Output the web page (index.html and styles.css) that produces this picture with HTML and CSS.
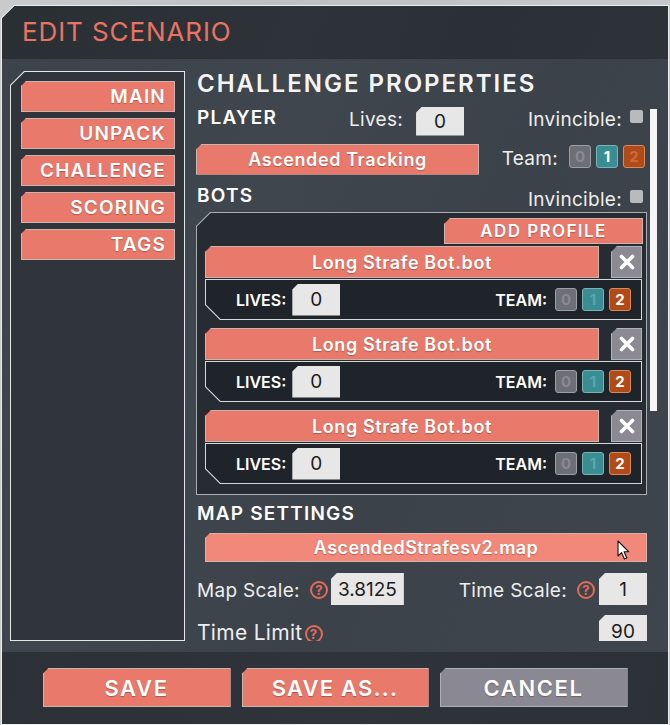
FILE: index.html
```html
<!DOCTYPE html>
<html>
<head>
<meta charset="utf-8">
<title>Edit Scenario</title>
<link rel="stylesheet" href="styles.css">
</head>
<body>
<div class="panel">
  <div class="panel-inner">
    <header class="head"><h1 class="head-title">EDIT SCENARIO</h1></header>
    <div class="main">
      <nav class="nav">
        <div class="nav-in">
          <div class="nav-btn">MAIN</div>
          <div class="nav-btn">UNPACK</div>
          <div class="nav-btn">CHALLENGE</div>
          <div class="nav-btn">SCORING</div>
          <div class="nav-btn">TAGS</div>
        </div>
      </nav>
      <section class="content">
        <div class="scroll">
          <h2 class="title">CHALLENGE PROPERTIES</h2>
          <div class="row row-player">
            <span class="sect sect-player">PLAYER</span>
            <span class="lbl lbl-lives">Lives:</span>
            <span class="field field-lives">0</span>
            <span class="lbl lbl-inv">Invincible:</span>
            <span class="check"></span>
          </div>
          <div class="row row-team">
            <span class="sbtn sbtn-profile">Ascended Tracking</span>
            <span class="lbl lbl-team">Team:</span>
            <span class="teams teams-player">
              <span class="tb tb0">0</span><span class="tb tb1 on">1</span><span class="tb tb2">2</span>
            </span>
          </div>
          <div class="row row-bots">
            <span class="sect sect-bots">BOTS</span>
            <span class="lbl lbl-inv2">Invincible:</span>
            <span class="check check2"></span>
          </div>
          <div class="bots">
            <div class="bots-in">
              <div class="add-row"><span class="sbtn add-btn">ADD PROFILE</span></div>

              <div class="bot">
                <div class="bot-head">
                  <span class="sbtn bot-name">Long Strafe Bot.bot</span>
                  <span class="del"><svg width="18" height="16" viewBox="0 0 18 16"><path d="M3.5 2.5 L14.5 13.5 M14.5 2.5 L3.5 13.5" stroke="#fff" stroke-width="3.6" stroke-linecap="round"/></svg></span>
                </div>
                <div class="bot-row">
                  <div class="bot-row-in">
                    <span class="blbl">LIVES:</span>
                    <span class="field field-bot">0</span>
                    <span class="blbl blbl-team">TEAM:</span>
                    <span class="teams teams-bot">
                      <span class="tb tb0">0</span><span class="tb tb1">1</span><span class="tb tb2 on">2</span>
                    </span>
                  </div>
                </div>
              </div>

              <div class="bot">
                <div class="bot-head">
                  <span class="sbtn bot-name">Long Strafe Bot.bot</span>
                  <span class="del"><svg width="18" height="16" viewBox="0 0 18 16"><path d="M3.5 2.5 L14.5 13.5 M14.5 2.5 L3.5 13.5" stroke="#fff" stroke-width="3.6" stroke-linecap="round"/></svg></span>
                </div>
                <div class="bot-row">
                  <div class="bot-row-in">
                    <span class="blbl">LIVES:</span>
                    <span class="field field-bot">0</span>
                    <span class="blbl blbl-team">TEAM:</span>
                    <span class="teams teams-bot">
                      <span class="tb tb0">0</span><span class="tb tb1">1</span><span class="tb tb2 on">2</span>
                    </span>
                  </div>
                </div>
              </div>

              <div class="bot">
                <div class="bot-head">
                  <span class="sbtn bot-name">Long Strafe Bot.bot</span>
                  <span class="del"><svg width="18" height="16" viewBox="0 0 18 16"><path d="M3.5 2.5 L14.5 13.5 M14.5 2.5 L3.5 13.5" stroke="#fff" stroke-width="3.6" stroke-linecap="round"/></svg></span>
                </div>
                <div class="bot-row">
                  <div class="bot-row-in">
                    <span class="blbl">LIVES:</span>
                    <span class="field field-bot">0</span>
                    <span class="blbl blbl-team">TEAM:</span>
                    <span class="teams teams-bot">
                      <span class="tb tb0">0</span><span class="tb tb1">1</span><span class="tb tb2 on">2</span>
                    </span>
                  </div>
                </div>
              </div>
            </div>
          </div>

          <div class="row row-map"><span class="sect">MAP SETTINGS</span></div>
          <div class="map-btn">AscendedStrafesv2.map
            <svg class="cursor" width="13" height="21" viewBox="0 0 13 21"><path d="M1 1 L1 16 L4.6 12.6 L7.4 19 L9.8 18 L7.1 11.8 L11.8 11.8 Z" fill="#fff" stroke="#111" stroke-width="1.1" stroke-linejoin="round"/></svg>
          </div>
          <div class="row row-scale">
            <span class="lbl lbl-big">Map Scale:</span>
            <span class="help">?</span>
            <span class="field field-scale">3.8125</span>
            <span class="lbl lbl-big lbl-ts">Time Scale:</span>
            <span class="help help-ts">?</span>
            <span class="field field-small">1</span>
          </div>
          <div class="row row-limit">
            <span class="lbl lbl-limit">Time Limit</span>
            <span class="help help-tl">?</span>
            <span class="field field-small field-tl">90</span>
          </div>
        </div>
        <div class="track"><div class="thumb"></div></div>
      </section>
    </div>
    <footer class="foot">
      <div class="fbtn">SAVE</div>
      <div class="fbtn fbtn-as">SAVE AS...</div>
      <div class="fbtn fbtn-cancel">CANCEL</div>
    </footer>
  </div>
</div>
</body>
</html>
```

FILE: styles.css
```css
* { box-sizing: border-box; margin: 0; padding: 0; }

html, body { width: 670px; height: 725px; overflow: hidden; }

body {
  background: linear-gradient(90deg, #c9cacb 0%, #bdbfc0 40%, #c6c8c9 100%);
  font-family: Inter, "Open Sans", "DejaVu Sans", sans-serif;
  color: #f2f2f2;
}

/* ---------- outer panel ---------- */
.panel {
  margin: 5px 0 0 1px;
  width: 668px;
  height: 720px;
  padding: 1px;
  background: #eceeef;
  clip-path: polygon(13px 0, 100% 0, 100% 100%, 0 100%, 0 13px);
}

.panel-inner {
  height: 100%;
  display: flex;
  flex-direction: column;
  background: #3d444b;
  clip-path: polygon(12.6px 0, 100% 0, 100% 100%, 0 100%, 0 12.6px);
}

.head {
  flex: 0 0 53px;
  height: 53px;
  display: flex;
  align-items: center;
  padding: 0 0 2px 20px;
  background: linear-gradient(110deg, #2a2f34 0%, #2d3338 45%, #2a3035 70%, #2c3237 100%);
}

.head-title {
  font-size: 26px;
  font-weight: 400;
  color: #ea7362;
  line-height: 30px;
  letter-spacing: 0.9px;
}

.main {
  flex: 0 0 593px;
  height: 593px;
  display: flex;
  background: linear-gradient(115deg, #3c434a 0%, #3f464d 35%, #3b4249 60%, #3e454c 100%);
}

/* ---------- left nav ---------- */
.nav {
  margin: 12px 0 0 8px;
  width: 175px;
  height: 570px;
  padding: 1px;
  background: #e4e6e8;
  clip-path: polygon(14px 0, 100% 0, 100% 100%, 0 100%, 0 14px);
}

.nav-in {
  height: 100%;
  background: #2f353a;
  clip-path: polygon(13.6px 0, 100% 0, 100% 100%, 0 100%, 0 13.6px);
  padding: 9px 9px 0 10px;
  display: flex;
  flex-direction: column;
  gap: 6px;
}

.nav-btn {
  height: 31px;
  background: #e8796b;
  border: 1px solid #cdb3ae;
  clip-path: polygon(5px 0, 100% 0, 100% 100%, 0 100%, 0 5px);
  color: #fff;
  font-size: 19px;
  font-weight: 600;
  line-height: 29px;
  letter-spacing: 1.2px;
  text-align: right;
  padding-right: 8px;
  text-shadow: 0 1px 1px rgba(80, 30, 20, 0.35);
}

/* ---------- content ---------- */
.content {
  margin: 5px 0 0 11px;
  height: 577px;
  display: flex;
}

.scroll {
  width: 451px;
  height: 577px;
  overflow: hidden;
}

.track {
  margin-left: 3px;
  width: 7px;
}

.thumb {
  margin-top: 45px;
  height: 302px;
  background: #f5f5f5;
}

.title {
  height: 40px;
  padding: 3px 0 0 1px;
  font-size: 24px;
  font-weight: 600;
  line-height: 34px;
  letter-spacing: 2px;
  color: #f4f4f4;
}

.row {
  display: flex;
  align-items: center;
}

.sect {
  margin-left: 1px;
  font-size: 19px;
  font-weight: 600;
  color: #fff;
  line-height: 24px;
  letter-spacing: 1.2px;
}

.lbl {
  font-size: 19px;
  font-weight: 400;
  color: #eeeeee;
  line-height: 24px;
  letter-spacing: 0.3px;
}

.field {
  display: flex;
  align-items: center;
  justify-content: center;
  background: #e7e7e7;
  color: #1d1d1d;
  font-size: 19px;
  font-weight: 400;
  clip-path: polygon(6px 0, 100% 0, 100% 100%, 0 100%, 0 6px);
}

.check {
  width: 13px;
  height: 13px;
  border-radius: 2px;
  background: #b9babc;
}

/* player row */
.row-player { height: 34px; }
.sect-player { width: 152px; margin-bottom: 6px; }
.lbl-lives { margin-bottom: 3px; }
.field-lives { margin-left: 13px; width: 48px; height: 29px; }
.lbl-inv { margin-left: auto; margin-bottom: 3px; }
.check { margin: 0 4px 9px 8px; }

/* team row */
.row-team { height: 42px; }

.sbtn {
  display: flex;
  align-items: center;
  justify-content: center;
  background: #e8796b;
  border: 1px solid #cdb3ae;
  clip-path: polygon(6px 0, 100% 0, 100% 100%, 0 100%, 0 6px);
  color: #fff;
  font-size: 18px;
  font-weight: 600;
  letter-spacing: 0.6px;
  text-shadow: 0 1px 1px rgba(80, 30, 20, 0.35);
}

.sbtn-profile { width: 283px; height: 31px; }
.lbl-team { margin-left: auto; margin-bottom: 1px; }

.teams { display: flex; gap: 5px; }
.teams-player { margin: 0 2px 6px 11px; }

.tb {
  width: 22px;
  height: 23px;
  border-radius: 3px;
  border: 1px solid;
  display: flex;
  align-items: center;
  justify-content: center;
  font-size: 15px;
  font-weight: 700;
}
.tb0 { background: #6d6f76; border-color: #9c9ea3; color: #888a90; }
.tb1 { background: #3a8d93; border-color: #79b3b6; color: #5aa6ab; }
.tb2 { background: #b04a17; border-color: #d68a62; color: #c96d41; }
.tb.on { color: #ffffff; }

/* bots row */
.row-bots { margin-top: 2px; height: 29px; }
.sect-bots { margin-bottom: 2px; }
.lbl-inv2 { margin-left: auto; margin-top: 6px; }
.check2 { margin: 0 4px 0 8px; }

.bots {
  margin-top: 1px;
  width: 451px;
  height: 283px;
  padding: 1px;
  background: #a9aeb3;
  clip-path: polygon(14px 0, 100% 0, 100% 100%, 0 100%, 0 14px);
}

.bots-in {
  height: 100%;
  background: #272c32;
  clip-path: polygon(13.6px 0, 100% 0, 100% 100%, 0 100%, 0 13.6px);
  padding: 5px 3px 0 8px;
}

.add-row { display: flex; justify-content: flex-end; }
.add-btn { width: 199px; height: 26px; font-size: 17px; letter-spacing: 1.4px; }

.bot { margin-top: 8px; }
.add-row + .bot { margin-top: 2px; }

.bot-head { display: flex; gap: 12px; height: 32px; }
.bot-name { width: 394px; height: 32px; }

.del {
  width: 31px;
  height: 32px;
  display: flex;
  align-items: center;
  justify-content: center;
  background: #8b8a93;
  border: 1px solid #b3b2b9;
  clip-path: polygon(6px 0, 100% 0, 100% 100%, 0 100%, 0 6px);
}

.bot-row {
  margin-top: 1px;
  height: 41px;
  width: 437px;
  padding: 1px;
  background: #d6d9dc;
  clip-path: polygon(0 0, 100% 0, 100% 100%, 15px 100%, 0 calc(100% - 15px));
}

.bot-row-in {
  height: 100%;
  background: #1f242a;
  clip-path: polygon(0 0, 100% 0, 100% 100%, 14.6px 100%, 0 calc(100% - 14.6px));
  display: flex;
  align-items: center;
  padding: 0 10px 0 30px;
}

.blbl {
  font-size: 16px;
  font-weight: 600;
  color: #fff;
}

.field-bot { margin-left: 6px; width: 48px; height: 32px; }
.blbl-team { margin-left: auto; }
.teams-bot { margin-left: 8px; }

/* map settings */
.row-map { margin-top: 5px; height: 28px; }

.map-btn {
  position: relative;
  margin: 5px 0 0 9px;
  width: 442px;
  height: 29px;
  display: flex;
  align-items: center;
  justify-content: center;
  background: #f2887a;
  border: 1px solid #d8b1aa;
  clip-path: polygon(5px 0, 100% 0, 100% 100%, 0 100%, 0 5px);
  color: #fff;
  font-size: 18px;
  font-weight: 600;
  letter-spacing: 0.4px;
  text-shadow: 0 1px 1px rgba(80, 30, 20, 0.35);
}

.cursor {
  position: absolute;
  left: 411px;
  top: 6px;
}

.row-scale { margin-top: 11px; height: 32px; }
.lbl-big { margin: 4px 0 0 1px; font-size: 19px; }

.help {
  width: 18px;
  height: 18px;
  border: 2px solid #e36b59;
  border-radius: 50%;
  color: #e36b59;
  font-size: 13px;
  font-weight: 700;
  line-height: 14px;
  text-align: center;
  margin-left: 10px;
  margin-top: 1px;
}

.field-scale { margin-left: 3px; width: 73px; height: 32px; }
.lbl-ts { margin-left: auto; }
.help-ts { margin-left: 10px; }
.field-small { margin-left: 4px; width: 48px; height: 32px; }

.row-limit { margin-top: 10px; height: 32px; align-items: flex-start; }
.lbl-limit { margin: 6px 0 0 1px; font-size: 21px; letter-spacing: 0.3px; }
.help-tl { margin-left: 2px; margin-top: 10px; }
.field-tl { margin-left: auto; }

/* ---------- footer ---------- */
.foot {
  flex: 0 0 72px;
  height: 72px;
  display: flex;
  justify-content: center;
  gap: 11px;
  padding-top: 16px;
  background: linear-gradient(100deg, #2b3136 0%, #2e343a 50%, #2b3136 100%);
}

.fbtn {
  width: 188px;
  height: 39px;
  display: flex;
  align-items: center;
  justify-content: center;
  background: #e8796b;
  border: 1px solid #ccb2ad;
  clip-path: polygon(6px 0, 100% 0, 100% 100%, 0 100%, 0 6px);
  color: #fff;
  font-size: 22px;
  font-weight: 600;
  letter-spacing: 1.6px;
  text-shadow: 0 1px 1px rgba(60, 20, 20, 0.35);
}

.fbtn-as { width: 187px; letter-spacing: 1.2px; }
.fbtn-cancel { background: #8a8893; border-color: #aeadb4; }
```
